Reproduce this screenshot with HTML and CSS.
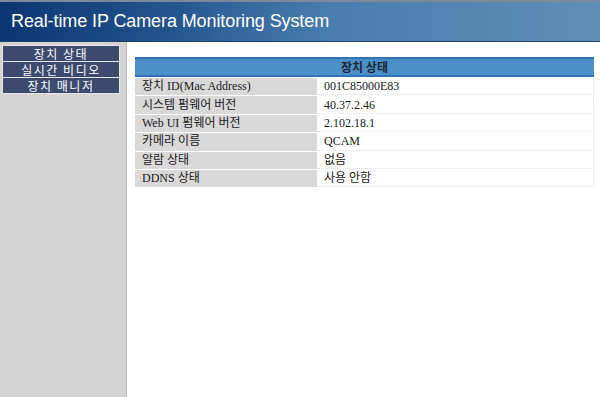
FILE: index.html
```html
<!DOCTYPE html>
<html>
<head>
<meta charset="utf-8">
<link rel="stylesheet" href="styles.css">
</head>
<body>
<header class="top">
  <h1 class="title">Real-time IP Camera Monitoring System</h1>
</header>
<div class="main">
  <nav class="side">
    <a class="menu">장치 상태</a>
    <a class="menu">실시간 비디오</a>
    <a class="menu">장치 매니저</a>
  </nav>
  <section class="content">
    <table class="info">
      <thead>
        <tr><th colspan="2">장치 상태</th></tr>
      </thead>
      <tbody>
        <tr><td class="lbl">장치 ID(Mac Address)</td><td class="val">001C85000E83</td></tr>
        <tr><td class="lbl">시스템 펌웨어 버전</td><td class="val">40.37.2.46</td></tr>
        <tr><td class="lbl">Web UI 펌웨어 버전</td><td class="val">2.102.18.1</td></tr>
        <tr><td class="lbl">카메라 이름</td><td class="val">QCAM</td></tr>
        <tr><td class="lbl">알람 상태</td><td class="val">없음</td></tr>
        <tr><td class="lbl">DDNS 상태</td><td class="val">사용 안함</td></tr>
      </tbody>
    </table>
  </section>
</div>
</body>
</html>
```
FILE: styles.css
```css
html, body {
  margin: 0;
  padding: 0;
  height: 100%;
}
body {
  background: #ffffff;
  font-family: "Liberation Serif", "Noto Sans CJK KR", serif;
  display: flex;
  flex-direction: column;
  overflow: hidden;
}
.top {
  height: 39px;
  border-top: 2px solid #7d8a9c;
  border-bottom: 1px solid #1d3f6a;
  background: linear-gradient(90deg, #0b3571 0%, #24548d 28%, #4a7dae 55%, #5f8eb6 100%);
  display: flex;
  align-items: center;
  padding-left: 11px;
  flex-shrink: 0;
}
.title {
  margin: 0;
  font-family: "Liberation Sans", Arial, sans-serif;
  font-weight: normal;
  font-size: 18px;
  color: #ffffff;
  letter-spacing: -0.1px;
}
.main {
  flex: 1;
  display: flex;
}
.side {
  width: 127px;
  background: #d4d4d4;
  border-right: 1px solid #b8b8b8;
  padding: 3px 0 0 2px;
  box-sizing: border-box;
  display: flex;
  flex-direction: column;
}
.menu {
  display: block;
  width: 118px;
  height: 17px;
  box-sizing: border-box;
  background: #3b4a6d;
  border: 1px solid #e6e6ea;
  color: #ffffff;
  font-family: "Noto Sans CJK KR", sans-serif;
  font-size: 12px;
  line-height: 15px;
  text-align: center;
  letter-spacing: 1.5px;
  overflow: hidden;
}
.menu + .menu {
  margin-top: -1px;
}
.content {
  flex: 1;
  padding: 14px 6px 0 8px;
}
.info {
  width: 459px;
  border-collapse: separate;
  border-spacing: 0 1px;
  font-size: 12px;
  color: #1a1a1a;
}
.info th {
  height: 16px;
  background: #4c90c9;
  border-top: 2px solid #2f73b6;
  border-bottom: 2px solid #2f73b6;
  font-family: "Noto Sans CJK KR", sans-serif;
  font-weight: bold;
  font-size: 12px;
  color: #1b2430;
  padding: 0;
  line-height: 16px;
}
.info td {
  height: 16.4px;
  padding: 0 0 0 7px;
  line-height: 16px;
  font-family: "Liberation Serif", "Noto Sans CJK KR", serif;
}
.lbl {
  width: 175px;
  background: #d9d9d9;
  border-right: 2px solid #ffffff;
  border-bottom: 1px solid #d9d9d9;
}
.val {
  background: #ffffff;
  border-bottom: 1px dotted #e2e2e2;
  border-right: 1px dotted #e2e2e2;
  padding-left: 5px !important;
}
```
